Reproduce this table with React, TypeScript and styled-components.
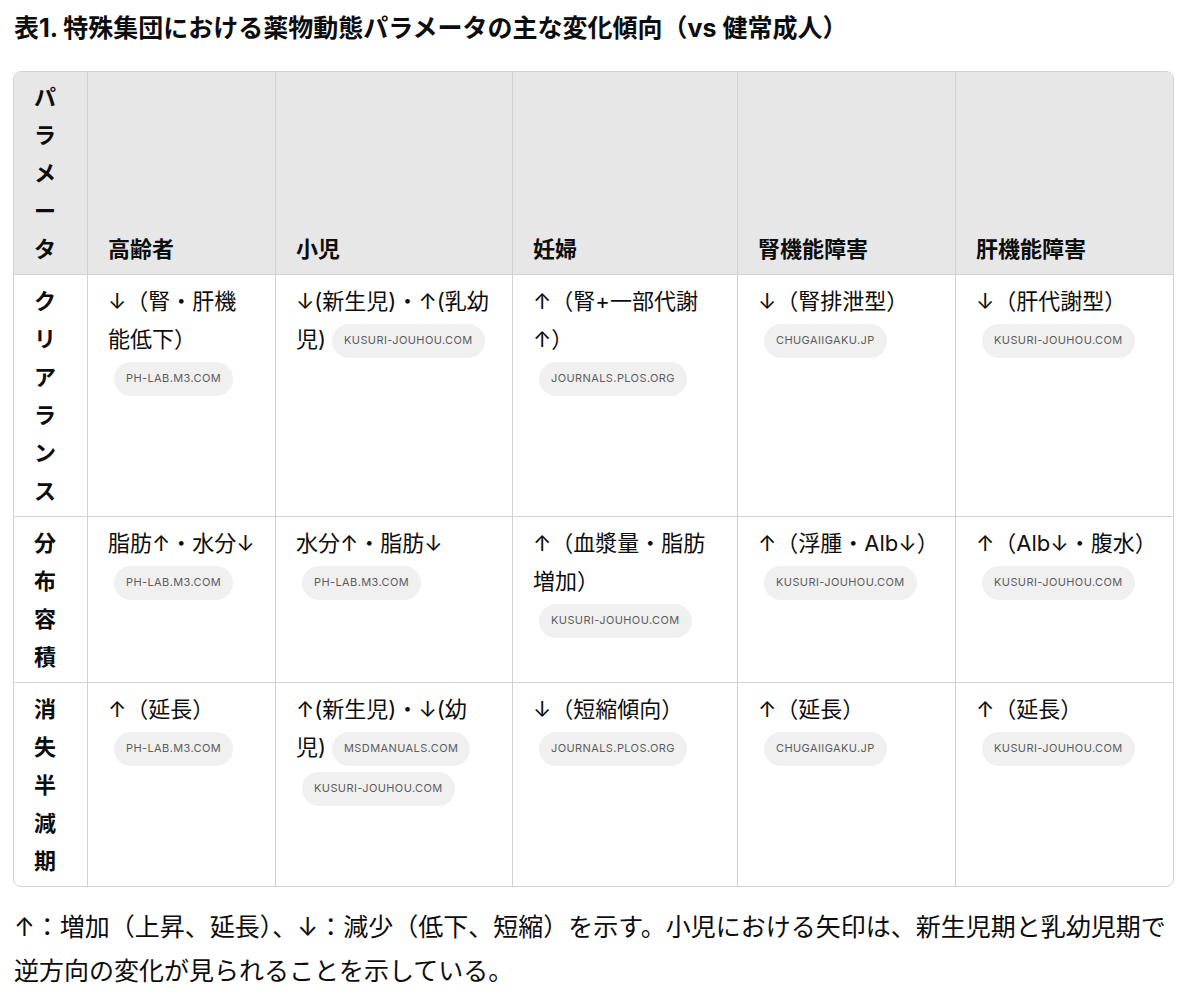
import React from "react";
import styled, { createGlobalStyle } from "styled-components";

const Global = createGlobalStyle`
  html, body { margin: 0; padding: 0; background: #ffffff; }
  body {
    font-family: "Inter", "Noto Sans CJK JP", sans-serif;
    color: #0d0d0d;
  }
`;

const Page = styled.div`
  padding: 12px 26px 0 13px;
  width: 1161px;
`;

const Title = styled.h3`
  margin: 0 0 27px 1px;
  font-size: 25px;
  line-height: 32px;
  font-weight: 700;
  white-space: nowrap;
`;

const TableWrap = styled.div`
  border: 1px solid #d2d2d2;
  border-radius: 8px;
  overflow: hidden;
`;

const Table = styled.table`
  width: 100%;
  table-layout: fixed;
  border-collapse: separate;
  border-spacing: 0;
  font-size: 22px;
  line-height: 38px;
`;

const HeadCell = styled.th`
  background: #e7e7e7;
  text-align: left;
  vertical-align: bottom;
  font-weight: 700;
  padding: 6px 20px;
  border-right: 1px solid #d2d2d2;
  border-bottom: 1px solid #d2d2d2;
  &:last-child { border-right: none; }
`;

const ParamCell = styled.th`
  text-align: left;
  vertical-align: top;
  font-weight: 700;
  padding: 6.5px 20px;
  border-right: 1px solid #d2d2d2;
  border-bottom: 1px solid #d2d2d2;
  tr:last-child > & { border-bottom: none; }
`;

const Cell = styled.td`
  vertical-align: top;
  padding: 6.5px 20px;
  border-right: 1px solid #d2d2d2;
  border-bottom: 1px solid #d2d2d2;
  &:last-child { border-right: none; }
  tr:last-child > & { border-bottom: none; }
`;

const Chip = styled.span`
  display: inline-flex;
  align-items: center;
  height: 34px;
  padding: 0 12px;
  margin: 2px 0 2px 6px;
  border-radius: 17px;
  background: #f0f0f0;
  color: #5d5d5d;
  font-family: "Inter", sans-serif;
  font-size: 11px;
  letter-spacing: 0.4px;
  line-height: 1;
  vertical-align: middle;
  white-space: nowrap;
`;

const Note = styled.p`
  margin: 18px 0 0 1px;
  font-size: 25px;
  line-height: 44px;
`;

type Entry = { text: string; chips: string[] };

const widths = [74, 188, 237, 225, 218, 219];
const headers = ["パラメータ", "高齢者", "小児", "妊婦", "腎機能障害", "肝機能障害"];

const rows: { param: string; cells: Entry[] }[] = [
  {
    param: "クリアランス",
    cells: [
      { text: "↓（腎・肝機能低下）", chips: ["PH-LAB.M3.COM"] },
      { text: "↓(新生児)・↑(乳幼児)", chips: ["KUSURI-JOUHOU.COM"] },
      { text: "↑（腎+一部代謝↑）", chips: ["JOURNALS.PLOS.ORG"] },
      { text: "↓（腎排泄型）", chips: ["CHUGAIIGAKU.JP"] },
      { text: "↓（肝代謝型）", chips: ["KUSURI-JOUHOU.COM"] },
    ],
  },
  {
    param: "分布容積",
    cells: [
      { text: "脂肪↑・水分↓", chips: ["PH-LAB.M3.COM"] },
      { text: "水分↑・脂肪↓", chips: ["PH-LAB.M3.COM"] },
      { text: "↑（血漿量・脂肪増加）", chips: ["KUSURI-JOUHOU.COM"] },
      { text: "↑（浮腫・Alb↓）", chips: ["KUSURI-JOUHOU.COM"] },
      { text: "↑（Alb↓・腹水）", chips: ["KUSURI-JOUHOU.COM"] },
    ],
  },
  {
    param: "消失半減期",
    cells: [
      { text: "↑（延長）", chips: ["PH-LAB.M3.COM"] },
      { text: "↑(新生児)・↓(幼児)", chips: ["MSDMANUALS.COM", "KUSURI-JOUHOU.COM"] },
      { text: "↓（短縮傾向）", chips: ["JOURNALS.PLOS.ORG"] },
      { text: "↑（延長）", chips: ["CHUGAIIGAKU.JP"] },
      { text: "↑（延長）", chips: ["KUSURI-JOUHOU.COM"] },
    ],
  },
];

export default function App() {
  return (
    <>
      <Global />
      <Page>
        <Title>表1. 特殊集団における薬物動態パラメータの主な変化傾向（vs 健常成人）</Title>
        <TableWrap>
          <Table>
            <colgroup>
              {widths.map((w, i) => (
                <col key={i} style={{ width: w }} />
              ))}
            </colgroup>
            <thead>
              <tr>
                {headers.map((h) => (
                  <HeadCell key={h}>{h}</HeadCell>
                ))}
              </tr>
            </thead>
            <tbody>
              {rows.map((r) => (
                <tr key={r.param}>
                  <ParamCell>{r.param}</ParamCell>
                  {r.cells.map((c, i) => (
                    <Cell key={i}>
                      {c.text}
                      {c.chips.map((ch) => (
                        <Chip key={ch}>{ch}</Chip>
                      ))}
                    </Cell>
                  ))}
                </tr>
              ))}
            </tbody>
          </Table>
        </TableWrap>
        <Note>
          ↑：増加（上昇、延長）、↓：減少（低下、短縮）を示す。小児における矢印は、新生児期と乳幼児期で逆方向の変化が見られることを示している。
        </Note>
      </Page>
    </>
  );
}
